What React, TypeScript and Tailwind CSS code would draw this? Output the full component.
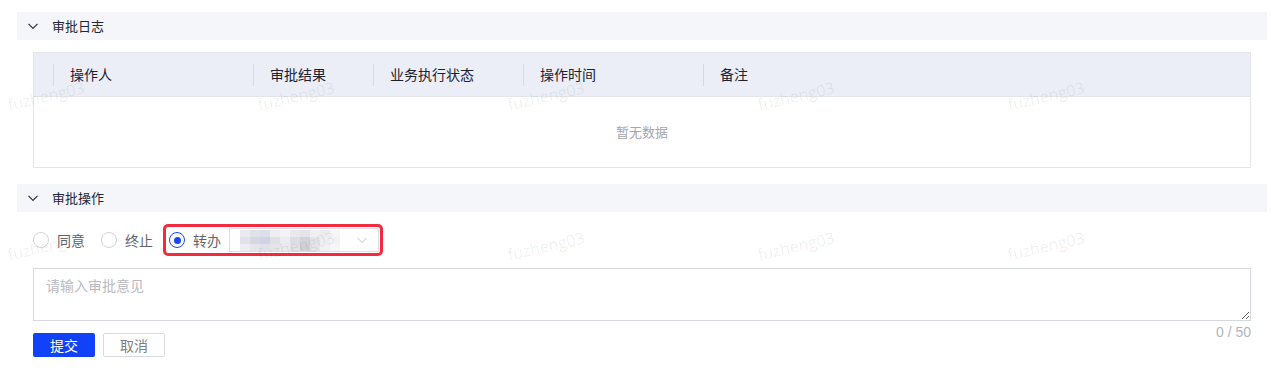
import React from "react";

const FONT = '"Noto Sans CJK SC", "Noto Sans", "Liberation Sans", sans-serif';

function Chevron({ className }: { className?: string }) {
  return (
    <svg width="12" height="12" viewBox="0 0 12 12" className={className}>
      <path d="M1.5 3.8 L6 8.3 L10.5 3.8" fill="none" stroke="currentColor" strokeWidth="1.2" />
    </svg>
  );
}

function SectionHeader({ title }: { title: string }) {
  return (
    <div className="flex h-[28px] items-center bg-[#f5f6fa] pl-[10px]">
      <Chevron className="text-[#2b2f3a]" />
      <span className="ml-[13px] text-[13px] text-[#1f2533]">{title}</span>
    </div>
  );
}

function Radio({ label, checked }: { label: string; checked?: boolean }) {
  return (
    <label className="flex items-center">
      {checked ? (
        <span className="flex h-4 w-4 items-center justify-center rounded-full border-[1.5px] border-[#1846f2]">
          <span className="h-[7px] w-[7px] rounded-full bg-[#1846f2]" />
        </span>
      ) : (
        <span className="h-4 w-4 rounded-full border border-[#d3d5da] bg-white" />
      )}
      <span className="ml-2 text-[14px] text-[#62656d]">{label}</span>
    </label>
  );
}

const cols: { label: string; w: string }[] = [
  { label: "操作人", w: "w-[200px]" },
  { label: "审批结果", w: "w-[120px]" },
  { label: "业务执行状态", w: "w-[150px]" },
  { label: "操作时间", w: "w-[180px]" },
  { label: "备注", w: "flex-1" },
];

function Mosaic() {
  const blocks: [number, number, string][] = [
    [0, 0, "#eaeaf0"], [10, 0, "#e0e2ea"], [20, 0, "#dcdfe9"], [30, 0, "#ededf2"], [40, 0, "#f3f3f6"], [50, 0, "#e8e8ee"], [60, 0, "#e4e4ea"], [70, 0, "#f0f0f3"], [80, 0, "#ececf0"], [90, 0, "#f5f5f7"],
    [0, 7, "#e2e3ea"], [10, 7, "#d5d7e1"], [20, 7, "#d0d4e2"], [30, 7, "#dfe0e8"], [40, 7, "#ebebf0"], [50, 7, "#dcdce3"], [60, 7, "#d2d2d9"], [70, 7, "#e3e3e8"], [80, 7, "#eeeef1"], [90, 7, "#f3f3f5"],
    [0, 14, "#eeeef2"], [10, 14, "#e5e5eb"], [20, 14, "#dfe0e8"], [30, 14, "#e4e4eb"], [40, 14, "#e9e9ee"], [50, 14, "#e1e1e6"], [60, 14, "#cfcfd6"], [70, 14, "#e5e5e9"], [80, 14, "#f1f1f4"], [90, 14, "#f6f6f8"],
  ];
  return (
    <svg width="100" height="21" viewBox="0 0 100 21">
      {blocks.map(([x, y, c], i) => (
        <rect key={i} x={x} y={y} width="10" height="7" fill={c} />
      ))}
    </svg>
  );
}

export default function App() {
  const marks: { x: number; y: number }[] = [];
  for (const y of [96, 246]) for (const x of [46, 296, 546, 796, 1046]) marks.push({ x, y });

  return (
    <div className="relative h-[372px] w-[1278px] overflow-hidden bg-white" style={{ fontFamily: FONT }}>
      <div className="w-[1267px] pl-[17px] pt-3">
        <SectionHeader title="审批日志" />
        <div className="mx-4 mt-3 border border-[#e3e5eb]">
          <div className="flex h-[44px] items-center border-b border-[#e3e5eb] bg-[#ebeef7]">
            <div className="w-[19px]" />
            {cols.map((c) => (
              <div key={c.label} className={`${c.w} flex items-center`}>
                <span className="h-[22px] w-px bg-[#d6d9e2]" />
                <span className="ml-4 text-[14px] text-[#1d2130]">{c.label}</span>
              </div>
            ))}
          </div>
          <div className="flex h-[70px] items-center justify-center text-[13px] text-[#a2a5ad]">暂无数据</div>
        </div>

        <div className="mt-4">
          <SectionHeader title="审批操作" />
        </div>

        <div className="px-4">
          <div className="mt-3 flex items-center">
            <Radio label="同意" />
            <div className="ml-4">
              <Radio label="终止" />
            </div>
            <div className="ml-[10px] flex items-center rounded-[5px] border-[3px] border-[#f22b3f] py-px pl-[3px] pr-px">
              <Radio label="转办" checked />
              <div className="ml-2 flex h-6 w-[150px] items-center justify-between border border-[#dcdfe6] bg-white pl-[10px] pr-[10px]">
                <div className="blur-[0.5px]">
                  <Mosaic />
                </div>
                <svg width="12" height="12" viewBox="0 0 12 12" className="text-[#b9bcc4]">
                  <path d="M1.5 4 L6 8.5 L10.5 4" fill="none" stroke="currentColor" strokeWidth="1" />
                </svg>
              </div>
            </div>
          </div>

          <div className="relative mt-3">
            <textarea
              placeholder="请输入审批意见"
              className="block h-[53px] w-full resize-y border border-[#d6d8dd] px-3 py-[5px] text-[14px] leading-[22px] text-[#333] outline-none placeholder:text-[#b9bbc1]"
              style={{ fontFamily: FONT }}
            />
            <div
              className="absolute right-0 top-[calc(100%+4px)] text-[14px] leading-[14px] text-[#b3b5bb]"
              style={{ fontFamily: '"Liberation Sans", Arial, sans-serif' }}
            >
              0 / 50
            </div>
          </div>

          <div className="mt-3 flex gap-2">
            <button className="h-6 w-[62px] rounded-[2px] bg-[#1242f8] text-[14px] text-white">提交</button>
            <button className="h-6 w-[62px] rounded-[2px] border border-[#d9dadf] bg-white text-[14px] text-[#7c7f87]">取消</button>
          </div>
        </div>
      </div>

      <div className="pointer-events-none absolute inset-0">
        {marks.map((m, i) => (
          <span
            key={i}
            className="absolute -translate-x-1/2 -translate-y-1/2 -rotate-[13deg] whitespace-nowrap text-[16px] text-[rgba(0,0,0,0.07)]"
            style={{ left: m.x, top: m.y, fontFamily: '"Open Sans", sans-serif' }}
          >
            fuzheng03
          </span>
        ))}
      </div>
    </div>
  );
}
